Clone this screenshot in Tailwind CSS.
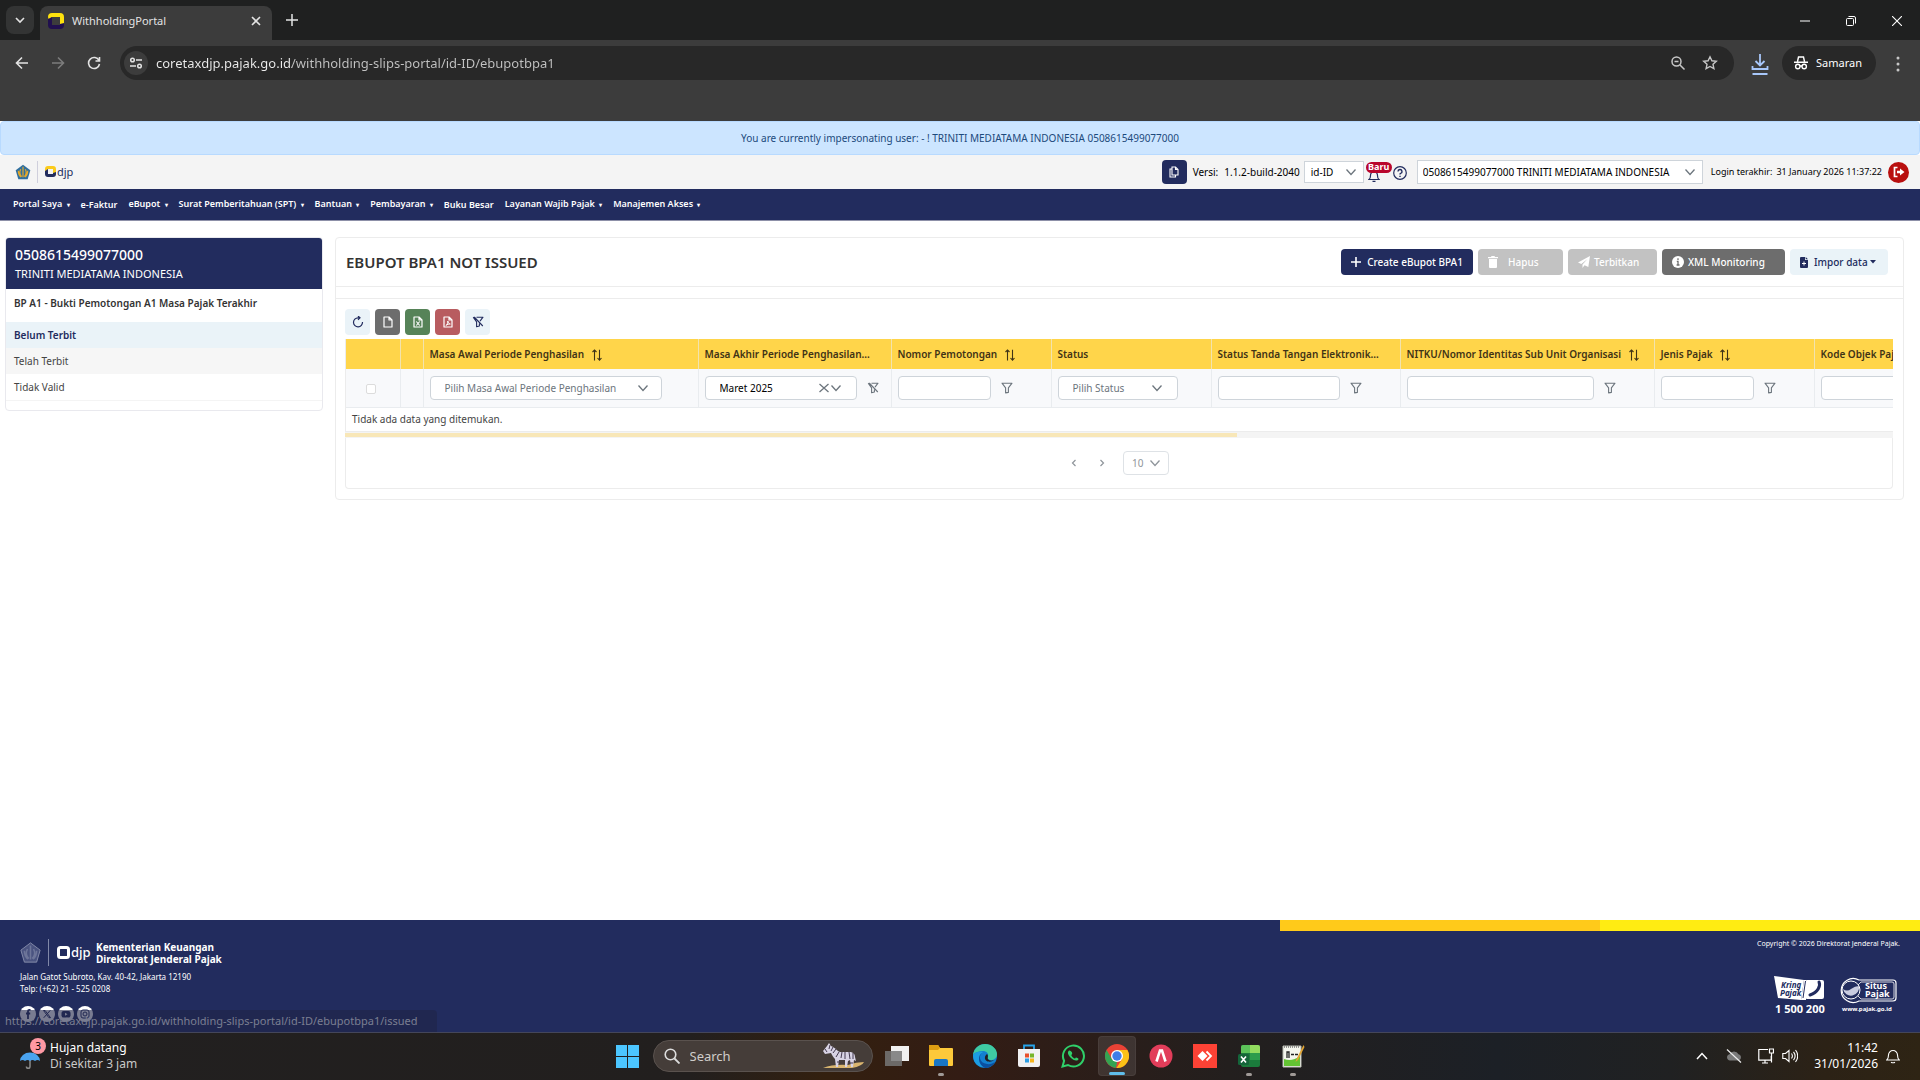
<!DOCTYPE html>
<html lang="id">
<head>
  <meta charset="UTF-8" />
  <meta name="viewport" content="width=device-width, initial-scale=1.0"/>
  <title>WithholdingPortal</title>
  <script src="https://cdn.jsdelivr.net/npm/@tailwindcss/browser@4"></script>
</head>
<body class="min-h-screen flex flex-col bg-white text-[11px] leading-4 text-[#333] font-['Noto_Sans','Open_Sans',sans-serif]">

  <!-- shared icons -->
  <svg class="hidden">
    <symbol id="chevron" viewBox="0 0 12 12"><path d="M1.5 3.5 6 8.5l4.5-5" fill="none" stroke="currentColor" stroke-width="1.3"/></symbol>
    <symbol id="funnel" viewBox="0 0 12 12"><path d="M1 1.2h10L7.4 5.8v4.6l-2.8.5V5.8z" fill="none" stroke="currentColor" stroke-width="1.1" stroke-linejoin="round"/></symbol>
    <symbol id="funnel-slash" viewBox="0 0 12 12"><path d="M4.500 1.200H11L8 5.200M1.200 1.200l3.400 4.600v5l2.800-.8V7.400M2.200 1l8.600 9" fill="none" stroke="currentColor" stroke-width="1.1" stroke-linejoin="round"/></symbol>
    <symbol id="sort" viewBox="0 0 12 12"><path d="M3.5 11.5V1M1.5 3l2-2 2 2M8.5.8v10.4M6.5 9l2 2.2 2-2.2" fill="none" stroke="currentColor" stroke-width="1.1"/></symbol>
    <symbol id="file" viewBox="0 0 12 12"><path d="M2 1h5l3 3v7H2zM7 1v3h3" fill="none" stroke="currentColor" stroke-width="1.2" stroke-linejoin="round"/></symbol>
    <symbol id="emblem" viewBox="0 0 24 24">
      <path d="M12 1 23 9.3 19 23H5L1 9.3z"/>
      <path d="M12 4v16M8.5 8c-2 4-1.500 8 1.500 11M15.500 8c2 4 1.500 8-1.500 11M5 10c0 4 1 7 4 9.500M19 10c0 4-1 7-4 9.500" fill="none" stroke="currentColor" stroke-width="1.800"/>
    </symbol>
  </svg>

  <!-- browser window -->
  <header class="bg-[#3c3c3c] text-[#e3e3e3]">
    <div class="flex h-10 items-end bg-[#1f2020]">
      <button aria-label="Search tabs" class="ml-1.5 mb-1.5 flex h-7 w-7 items-center justify-center rounded-lg bg-[#333434]">
        <svg class="h-3 w-3" viewBox="0 0 12 12"><path d="m2 4 4 4 4-4" fill="none" stroke="currentColor" stroke-width="1.6"/></svg>
      </button>
      <div class="ml-1.5 flex h-[34px] w-[232px] items-center rounded-t-lg bg-[#3c3c3c] pl-2 pr-2.5 pb-1">
        <svg class="h-4 w-4" viewBox="0 0 16 16"><path d="M0 4a4 4 0 0 1 4-4h8a4 4 0 0 1 4 4v7l-4 1V4H4L1 8z" fill="#fde10d"/><path d="M0 6 4 4v8h8v-1l4-1v2a4 4 0 0 1-4 4H4a4 4 0 0 1-4-4z" fill="#21104f"/></svg>
        <span class="ml-2 flex-1 text-[11px]">WithholdingPortal</span>
        <button aria-label="Close tab"><svg class="h-3 w-3" viewBox="0 0 12 12"><path d="m2 2 8 8m0-8-8 8" stroke="currentColor" stroke-width="1.6"/></svg></button>
      </div>
      <button aria-label="New tab" class="mb-3.5 ml-3.5"><svg class="h-3 w-3" viewBox="0 0 12 12"><path d="M6 0v12M0 6h12" stroke="currentColor" stroke-width="1.5"/></svg></button>
      <div class="mb-3.5 ml-auto flex items-center gap-9 pr-[18px] text-white">
        <button aria-label="Minimize"><svg class="h-2.5 w-2.5" viewBox="0 0 10 10"><path d="M0 5h10" stroke="currentColor"/></svg></button>
        <button aria-label="Restore"><svg class="h-2.5 w-2.5" viewBox="0 0 10 10"><path d="M.5 3.500a1 1 0 0 1 1-1h5a1 1 0 0 1 1 1v5a1 1 0 0 1-1 1h-5a1 1 0 0 1-1-1zM2.500.5H8A1.500 1.500 0 0 1 9.500 2v5.500" fill="none" stroke="currentColor"/></svg></button>
        <button aria-label="Close"><svg class="h-2.5 w-2.5" viewBox="0 0 10 10"><path d="m0 0 10 10M10 0 0 10" stroke="currentColor" stroke-width="1.1"/></svg></button>
      </div>
    </div>
    <div class="flex h-[81px] items-start pt-1.5 pr-5 pl-[15px]">
      <div class="flex h-[34px] w-[105px] items-center gap-[22px]">
        <button aria-label="Back"><svg class="h-3.5 w-3.5" viewBox="0 0 14 14"><path d="M13 7H2m5-5.500L1.500 7 7 12.500" fill="none" stroke="currentColor" stroke-width="1.600"/></svg></button>
        <button aria-label="Forward" class="text-[#7c7c7c]"><svg class="h-3.5 w-3.5" viewBox="0 0 14 14"><path d="M1 7h11M7 1.500 12.500 7 7 12.500" fill="none" stroke="currentColor" stroke-width="1.600"/></svg></button>
        <button aria-label="Reload"><svg class="h-3.5 w-3.5" viewBox="0 0 14 14"><path d="M12 4.500A5.500 5.500 0 1 0 12.500 8M12.500 1v4h-4" fill="none" stroke="currentColor" stroke-width="1.600"/></svg></button>
      </div>
      <div class="flex h-[34px] flex-1 items-center rounded-full bg-[#282828] pl-1 pr-4">
        <button aria-label="Site information" class="flex h-6 w-6 items-center justify-center rounded-full bg-[#3c3c3c]">
          <svg class="h-3.5 w-3.5" viewBox="0 0 14 14"><g fill="none" stroke="currentColor" stroke-width="1.500"><circle cx="3.500" cy="4" r="1.800"/><path d="M7 4h6M1 10h6"/><circle cx="10.500" cy="10" r="1.800"/></g></svg>
        </button>
        <input aria-label="Address" value="coretaxdjp.pajak.go.id/withholding-slips-portal/id-ID/ebupotbpa1" class="ml-2 flex-1 bg-[linear-gradient(90deg,#ededed_136px,#c3c3c3_136px)] bg-clip-text text-[13px] text-transparent outline-none"/>
        <button aria-label="Zoom" class="mr-4 text-[#c7c7c7]"><svg class="h-4 w-4" viewBox="0 0 16 16"><g fill="none" stroke="currentColor" stroke-width="1.500"><circle cx="6.500" cy="6.500" r="4.500"/><path d="m10 10 4.500 4.500M4.500 6.500h4"/></g></svg></button>
        <button aria-label="Bookmark" class="text-[#c7c7c7]"><svg class="h-4 w-4" viewBox="0 0 16 16"><path d="m8 1.800 1.900 4 4.400.5-3.300 3 .9 4.400L8 11.500l-3.900 2.200.9-4.400-3.300-3 4.400-.5z" fill="none" stroke="currentColor" stroke-width="1.400"/></svg></button>
      </div>
      <button aria-label="Downloads" class="ml-4 mr-3 mt-1.5 text-[#a8c7fa]"><svg class="h-6 w-5" viewBox="0 0 20 24"><path d="M10 2v11M5.500 9l4.500 4.500L14.500 9M2.500 14v3h15v-3M2.500 22h15" fill="none" stroke="currentColor" stroke-width="1.800"/></svg></button>
      <button class="flex h-[34px] w-[94px] items-center gap-2 rounded-full bg-[#282828] px-3 text-white">
        <svg class="h-3.5 w-3.5 shrink-0" viewBox="0 0 14 14"><g fill="none" stroke="currentColor" stroke-width="1.400"><path d="M3.500 5.500 4.500 1h5l1 4.500M0 6.200h14"/><circle cx="3.800" cy="10.500" r="2.200"/><circle cx="10.200" cy="10.500" r="2.200"/><path d="M6 10h2"/></g></svg>
        <span>Samaran</span>
      </button>
      <button aria-label="Menu" class="mt-2.5 ml-5"><svg class="h-4 w-1" viewBox="0 0 4 16" fill="#c7c7c7"><circle cx="2" cy="2" r="1.500"/><circle cx="2" cy="8" r="1.500"/><circle cx="2" cy="14" r="1.500"/></svg></button>
    </div>
  </header>

  <div class="flex h-[34px] items-center justify-center rounded-sm border border-[#b8daff] bg-[#cce5ff] text-[10px] text-[#1c4a7c]">You are currently impersonating user: - ! TRINITI MEDIATAMA INDONESIA 0508615499077000</div>

  <!-- app header -->
  <div class="flex h-[34px] items-center bg-[#f4f4f4] pl-[15px] pr-[11px] text-[10px] text-black">
    <svg class="h-4 w-4 text-[#e3a92c]" fill="#2f6f9f"><use href="#emblem"/></svg>
    <div class="mx-1.5 h-[22px] border-l border-[#cfcfdc]"></div>
    <svg class="h-5 w-8" viewBox="0 0 32 20">
      <path d="M1 7a3 3 0 0 1 3-3h5a3 3 0 0 1 3 3v6l-3 1V7H4l-3 3z" fill="#fbcb1c"/><path d="M1 9l3-2v5h5v-1l3-1v2a3 3 0 0 1-3 3H4a3 3 0 0 1-3-3z" fill="#222c5e"/>
      <text x="13" y="14" font-size="11" fill="#222c5e">djp</text>
    </svg>
    <button aria-label="Copy" class="ml-auto flex h-6 w-[25px] items-center justify-center rounded-sm bg-[#222c5e] text-white">
      <svg class="h-3 w-3" viewBox="0 0 12 12"><path d="M4 1h3.500L10 3.500V9H4zM7.500 1v2.500H10M4 3H2v8h5.500V9" fill="none" stroke="currentColor" stroke-width="1.100"/></svg>
    </button>
    <span class="ml-1.5">Versi:</span><span class="ml-1.5">1.1.2-build-2040</span>
    <div class="ml-1 flex h-[22px] w-[60px] items-center border border-[#ced4da] bg-white pl-1.5 pr-1.5">
      <select aria-label="Bahasa" class="w-full appearance-none outline-none"><option>id-ID</option></select>
      <svg class="h-3 w-3 shrink-0 text-[#6c757d]"><use href="#chevron"/></svg>
    </div>
    <button aria-label="Notifikasi" class="relative ml-0.5 h-6 w-[25px] text-[#222c5e]">
      <svg class="mt-2 ml-0.5 h-3 w-3" viewBox="0 0 12 12"><path d="M1 9.500h10c-1.500-1-1.500-2-1.500-4a3.500 3.500 0 0 0-7 0c0 2 0 3-1.500 4zM4.500 11.300h3" fill="none" stroke="currentColor" stroke-width="1.200"/></svg>
      <span class="absolute top-0.5 left-0 h-[11px] w-[26px] rounded-full bg-[#b9062c] text-[9px] leading-[10px] font-bold text-white">Baru</span>
    </button>
    <button aria-label="Bantuan" class="ml-0.5 mt-0.5 text-[#222c5e]"><svg class="h-3.5 w-3.5" viewBox="0 0 14 14"><circle cx="7" cy="7" r="6.300" fill="none" stroke="currentColor" stroke-width="1.200"/><path d="M5 5.500a2 2 0 1 1 2.600 1.900c-.4.100-.6.300-.6 1M7 9.800V11" fill="none" stroke="currentColor" stroke-width="1.400"/></svg></button>
    <div class="ml-2.5 flex h-6 w-[286px] items-center border border-[#ced4da] bg-white pl-[5px] pr-1.5">
      <select aria-label="Wajib Pajak" class="w-full appearance-none outline-none"><option>0508615499077000 TRINITI MEDIATAMA INDONESIA</option></select>
      <svg class="h-3 w-3 shrink-0 text-[#6c757d]"><use href="#chevron"/></svg>
    </div>
    <span class="ml-2 text-[9px]">Login terakhir:</span><span class="ml-1 text-[9px]">31 January 2026 11:37:22</span>
    <button aria-label="Keluar" class="ml-1.5 flex h-[21px] w-[21px] items-center justify-center rounded-full bg-[#b9100f] text-white">
      <svg class="h-3 w-3" viewBox="0 0 12 12"><path d="M4.500 1.500h-3v9h3" fill="none" stroke="currentColor" stroke-width="1.700"/><path d="M4 4.800h3V2.500L11.500 6 7 9.500V7.200H4z" fill="currentColor"/></svg>
    </button>
  </div>

  <nav class="flex h-8 items-center gap-[11px] border-b border-[#8d90a8] bg-[#222c5e] pl-[13px] text-[9px] font-semibold text-white">
    <a href="#">Portal Saya <span class="ml-0.5 text-[6px]">▾</span></a>
    <a href="#">e-Faktur</a>
    <a href="#">eBupot <span class="ml-0.5 text-[6px]">▾</span></a>
    <a href="#">Surat Pemberitahuan (SPT) <span class="ml-0.5 text-[6px]">▾</span></a>
    <a href="#">Bantuan <span class="ml-0.5 text-[6px]">▾</span></a>
    <a href="#">Pembayaran <span class="ml-0.5 text-[6px]">▾</span></a>
    <a href="#">Buku Besar</a>
    <a href="#">Layanan Wajib Pajak <span class="ml-0.5 text-[6px]">▾</span></a>
    <a href="#">Manajemen Akses <span class="ml-0.5 text-[6px]">▾</span></a>
  </nav>

  <main class="flex flex-1 items-start gap-3 pt-4 pr-4 pb-8 pl-[5px]">
    <aside class="h-[174px] w-[318px] shrink-0 overflow-hidden rounded border border-[#e9e9ee]">
      <div class="h-[51px] bg-[#222c5e] pt-2 pl-[9px] text-white">
        <div class="text-[14px] leading-[18px] font-medium">0508615499077000</div>
        <div class="text-[11px] leading-5">TRINITI MEDIATAMA INDONESIA</div>
      </div>
      <h2 class="h-[33px] pl-2 text-[10px] leading-7 font-semibold">BP A1 - Bukti Pemotongan A1 Masa Pajak Terakhir</h2>
      <ul class="border-b border-[#f4f4f4] text-[10px] leading-[26px] text-[#444]">
        <li><a href="#" class="block bg-[#eaf3f8] pl-2 font-semibold text-[#222c5e]">Belum Terbit</a></li>
        <li><a href="#" class="block bg-[#f6f6f6] pl-2">Telah Terbit</a></li>
        <li><a href="#" class="block pl-2">Tidak Valid</a></li>
      </ul>
    </aside>

    <section class="min-w-0 flex-1 rounded border border-[#ececec] pb-2.5">
      <div class="flex h-[49px] items-center gap-[5px] border-b border-[#ececec] pr-[15px] pl-2.5 text-[10px] font-medium text-white">
        <h1 class="mr-auto text-[15px] font-semibold text-[#333]">EBUPOT BPA1 NOT ISSUED</h1>
        <button class="flex h-[26px] w-[132px] items-center justify-center gap-1.5 rounded-sm bg-[#222c5e]">
          <svg class="h-2.5 w-2.5" viewBox="0 0 10 10"><path d="M5 0v10M0 5h10" stroke="currentColor" stroke-width="1.600"/></svg>Create eBupot BPA1
        </button>
        <button disabled class="flex h-[26px] w-[85px] items-center gap-2.5 rounded-sm bg-[#c2c2c2] pl-2.5">
          <svg class="h-3 w-2.5" viewBox="0 0 10 12" fill="currentColor"><path d="M0 1h3l.5-1h3L7 1h3v1.300H0zM1 3h8v8a1 1 0 0 1-1 1H2a1 1 0 0 1-1-1z"/></svg>Hapus
        </button>
        <button disabled class="flex h-[26px] w-[89px] items-center gap-1 rounded-sm bg-[#c2c2c2] pl-2.5">
          <svg class="h-3 w-3" viewBox="0 0 12 12" fill="currentColor"><path d="M12 0 10.300 11 6.500 9.300 4.500 12V8.500L9.500 3 3.300 8 0 6.500z"/></svg>Terbitkan
        </button>
        <button class="flex h-[26px] w-[123px] items-center gap-1 rounded-sm bg-[#6d6d6d] pl-2.5">
          <svg class="h-3 w-3" viewBox="0 0 12 12"><circle cx="6" cy="6" r="6" fill="#fff"/><path d="M6 2.300v1.600M4.800 5.400H6v3.400M4.600 9h2.900" fill="none" stroke="#6d6d6d" stroke-width="1.300"/></svg>XML Monitoring
        </button>
        <button class="flex h-[26px] w-[98px] items-center rounded-sm bg-[#eaf3f8] pl-2.5 text-[#222c5e]">
          <svg class="mr-1.5 h-[11px] w-2" viewBox="0 0 8 11"><path d="M1 0h4v3h3v7a1 1 0 0 1-1 1H1a1 1 0 0 1-1-1V1a1 1 0 0 1 1-1zM5.700 0 8 2.300H5.700z" fill="currentColor"/><path d="M4 4.500v4M2 6.500h4" stroke="#fff"/></svg>Impor data
          <svg class="ml-0.5 h-1 w-1.5" viewBox="0 0 6 4" fill="currentColor"><path d="M0 0h6L3 3.500z"/></svg>
        </button>
      </div>
      <div class="mt-[11px] border-t border-[#ececec] pt-2.5 pr-2.5 pl-[9px]">
        <div class="mb-1 flex gap-[5px] text-white">
          <button aria-label="Muat ulang" class="flex h-[26px] w-[25px] items-center justify-center rounded-sm bg-[#eaf3f8] text-[#222c5e]"><svg class="h-3 w-3" viewBox="0 0 12 12"><path d="M10.500 6A4.500 4.500 0 1 1 6 1.800h1.500M6 0l2 1.800L6 3.800" fill="none" stroke="currentColor" stroke-width="1.200"/></svg></button>
          <button aria-label="CSV" class="flex h-[26px] w-[25px] items-center justify-center rounded-sm bg-[#6d6d6d]"><svg class="h-3 w-3"><use href="#file"/></svg></button>
          <button aria-label="Excel" class="flex h-[26px] w-[25px] items-center justify-center rounded-sm bg-[#568358]"><svg class="h-3 w-3" viewBox="0 0 12 12"><use href="#file"/><path d="m4.300 5.500 3.400 4m0-4-3.400 4" stroke="currentColor" stroke-width="1.100"/></svg></button>
          <button aria-label="PDF" class="flex h-[26px] w-[25px] items-center justify-center rounded-sm bg-[#b85c60]"><svg class="h-3 w-3" viewBox="0 0 12 12"><use href="#file"/><path d="M4 9.500C5.500 8 6 6.500 5.800 5c.2 1.700 1 2.800 2.500 3C7 7.800 5 8.300 4 9.500z" fill="none" stroke="currentColor"/></svg></button>
          <button aria-label="Hapus filter" class="flex h-[26px] w-[25px] items-center justify-center rounded-sm bg-[#eaf3f8] text-[#222c5e]"><svg class="h-3 w-3"><use href="#funnel-slash"/></svg></button>
        </div>
        <div class="overflow-hidden border-l border-[#ececec]">
          <table class="w-[2690px] table-fixed border-collapse text-[10px]">
            <colgroup>
              <col class="w-[54px]"/><col class="w-[23px]"/><col class="w-[275px]"/><col class="w-[193px]"/><col class="w-[160px]"/><col class="w-[160px]"/><col class="w-[189px]"/><col class="w-[254px]"/><col class="w-[160px]"/><col/>
            </colgroup>
            <thead>
              <tr class="h-[30px] bg-[#ffd54a] text-left text-[#3f3316]">
                <th class="border-r border-[#f2e3ae]"></th>
                <th class="border-r border-[#f2e3ae]"></th>
                <th class="border-r border-[#f2e3ae] pl-1.5 font-semibold">Masa Awal Periode Penghasilan <svg class="ml-1 inline h-3 w-3"><use href="#sort"/></svg></th>
                <th class="border-r border-[#f2e3ae] pl-1.5 font-semibold">Masa Akhir Periode Penghasilan...</th>
                <th class="border-r border-[#f2e3ae] pl-1.5 font-semibold">Nomor Pemotongan <svg class="ml-1 inline h-3 w-3"><use href="#sort"/></svg></th>
                <th class="border-r border-[#f2e3ae] pl-1.5 font-semibold">Status</th>
                <th class="border-r border-[#f2e3ae] pl-1.5 font-semibold">Status Tanda Tangan Elektronik...</th>
                <th class="border-r border-[#f2e3ae] pl-1.5 font-semibold">NITKU/Nomor Identitas Sub Unit Organisasi <svg class="ml-1 inline h-3 w-3"><use href="#sort"/></svg></th>
                <th class="border-r border-[#f2e3ae] pl-1.5 font-semibold">Jenis Pajak <svg class="ml-1 inline h-3 w-3"><use href="#sort"/></svg></th>
                <th class="pl-1.5 font-semibold">Kode Objek Pajak</th>
              </tr>
              <tr class="h-[38px] bg-[#f8f9fb] text-[#6c757d]">
                <td class="border-r border-b border-[#e9ecef] pr-1 text-center"><input type="checkbox" disabled aria-label="Pilih semua" class="h-2.5 w-2.5 appearance-none rounded-xs border border-[#dcdcdc] bg-white align-middle"/></td>
                <td class="border-r border-b border-[#e9ecef]"></td>
                <td class="border-r border-b border-[#e9ecef] pr-9 pl-1.5">
                  <div class="flex h-6 items-center rounded-sm border border-[#ced4da] bg-white pr-3 pl-3.5">
                    <select aria-label="Masa Awal" class="w-full appearance-none outline-none"><option>Pilih Masa Awal Periode Penghasilan</option></select>
                    <svg class="h-3 w-3 shrink-0"><use href="#chevron"/></svg>
                  </div>
                </td>
                <td class="border-r border-b border-[#e9ecef] pl-1.5">
                  <div class="flex items-center">
                    <div class="flex h-6 flex-1 items-center rounded-sm border border-[#ced4da] bg-white pr-3.5 pl-3.5">
                      <select aria-label="Masa Akhir" class="w-full appearance-none text-black outline-none"><option>Maret 2025</option></select>
                      <button aria-label="Kosongkan" class="shrink-0"><svg class="h-3 w-3" viewBox="0 0 12 12"><path d="m1.500 2 9 8m0-8-9 8" stroke="currentColor" stroke-width="1.300"/></svg></button>
                      <svg class="h-3 w-3 shrink-0"><use href="#chevron"/></svg>
                    </div>
                    <button aria-label="Hapus filter" class="ml-2.5 mr-3"><svg class="h-3 w-3"><use href="#funnel-slash"/></svg></button>
                  </div>
                </td>
                <td class="border-r border-b border-[#e9ecef] pl-1.5"><div class="flex items-center"><input aria-label="Nomor Pemotongan" class="h-6 min-w-0 flex-1 rounded-sm border border-[#ced4da] bg-white"/><button aria-label="Filter" class="ml-2.5 mr-[38px]"><svg class="h-3 w-3"><use href="#funnel"/></svg></button></div></td>
                <td class="border-r border-b border-[#e9ecef] pr-[33px] pl-1.5">
                  <div class="flex h-6 items-center rounded-sm border border-[#ced4da] bg-white pr-3.5 pl-3.5">
                    <select aria-label="Status" class="w-full appearance-none outline-none"><option>Pilih Status</option></select>
                    <svg class="h-3 w-3 shrink-0"><use href="#chevron"/></svg>
                  </div>
                </td>
                <td class="border-r border-b border-[#e9ecef] pl-1.5"><div class="flex items-center"><input aria-label="Status Tanda Tangan" class="h-6 min-w-0 flex-1 rounded-sm border border-[#ced4da] bg-white"/><button aria-label="Filter" class="ml-2.5 mr-[38px]"><svg class="h-3 w-3"><use href="#funnel"/></svg></button></div></td>
                <td class="border-r border-b border-[#e9ecef] pl-1.5"><div class="flex items-center"><input aria-label="NITKU" class="h-6 min-w-0 flex-1 rounded-sm border border-[#ced4da] bg-white"/><button aria-label="Filter" class="ml-2.5 mr-[38px]"><svg class="h-3 w-3"><use href="#funnel"/></svg></button></div></td>
                <td class="border-r border-b border-[#e9ecef] pl-1.5"><div class="flex items-center"><input aria-label="Jenis Pajak" class="h-6 min-w-0 flex-1 rounded-sm border border-[#ced4da] bg-white"/><button aria-label="Filter" class="ml-2.5 mr-[38px]"><svg class="h-3 w-3"><use href="#funnel"/></svg></button></div></td>
                <td class="border-b border-[#e9ecef] pl-1.5"><input aria-label="Kode Objek Pajak" class="block h-6 w-[93px] rounded-sm border border-[#ced4da] bg-white"/></td>
              </tr>
            </thead>
            <tbody>
              <tr class="h-6"><td colspan="10" class="pl-1.5 text-[#444]">Tidak ada data yang ditemukan.</td></tr>
            </tbody>
          </table>
        </div>
        <div class="border-t border-[#ececec] bg-[#f4f4f4] pt-px pb-px"><div class="h-1 w-[57.6%] bg-[#f8e7b8]"></div></div>
        <div class="flex h-[51px] items-center justify-center gap-4 rounded-b border border-t-0 border-[#ececec] text-[#8f959b]">
          <button aria-label="Sebelumnya"><svg class="h-2.5 w-2.5" viewBox="0 0 10 10"><path d="M6.500 2 3.500 5l3 3" fill="none" stroke="currentColor" stroke-width="1.200"/></svg></button>
          <button aria-label="Berikutnya" class="ml-0.5"><svg class="h-2.5 w-2.5" viewBox="0 0 10 10"><path d="m3.500 2 3 3-3 3" fill="none" stroke="currentColor" stroke-width="1.200"/></svg></button>
          <div class="flex h-6 w-[46px] items-center rounded-sm border border-[#dee2e6] pr-[7px] pl-2">
            <select aria-label="Baris per halaman" class="w-full appearance-none text-[10px] outline-none"><option>10</option></select>
            <svg class="h-3 w-3 shrink-0"><use href="#chevron"/></svg>
          </div>
        </div>
      </div>
    </section>
  </main>

  <!-- site footer -->
  <footer class="relative bg-[#222c5e] text-[8px] text-white">
    <div class="ml-auto grid h-[11px] w-1/3 grid-cols-2"><div class="bg-[#ffca1a]"></div><div class="bg-[#ffec12]"></div></div>
    <div class="flex h-[101px] justify-between pr-5 pl-5">
      <div>
        <div class="mt-2 flex h-[27px] items-center">
          <svg class="h-[21px] w-[21px] text-[#6d7599]" fill="#4a5380" stroke="#8d94b0"><use href="#emblem"/></svg>
          <div class="mr-2 ml-[7px] h-[27px] border-l border-[#8088a8]"></div>
          <svg class="h-6 w-[35px]" viewBox="0 0 35 24"><rect x="1.500" y="6.500" width="10" height="10" rx="2" fill="none" stroke="#fff" stroke-width="3"/><text x="14" y="16" font-size="13" font-weight="500" fill="#fff">djp</text></svg>
          <div class="ml-1 text-[10px] leading-3 font-bold">Kementerian Keuangan<br/>Direktorat Jenderal Pajak</div>
        </div>
        <address class="mt-[5px] leading-3 not-italic">Jalan Gatot Subroto, Kav. 40-42, Jakarta 12190<br/>Telp: (+62) 21 - 525 0208</address>
        <div class="mt-[11px] flex gap-[3px] text-[#222c5e]">
          <a href="#" aria-label="Facebook"><svg class="h-4 w-4" viewBox="0 0 16 16"><circle cx="8" cy="8" r="8" fill="#fff"/><path d="M10.500 3.800H9.300c-1 0-1.300.6-1.300 1.500V13M6 7.500h4.200" fill="none" stroke="currentColor" stroke-width="1.800"/></svg></a>
          <a href="#" aria-label="X"><svg class="h-4 w-4" viewBox="0 0 16 16"><circle cx="8" cy="8" r="8" fill="#fff"/><path d="M4.500 4.500h1.600l5.400 7.200H9.900zM11.300 4.300l-6.600 7.500" fill="none" stroke="currentColor"/></svg></a>
          <a href="#" aria-label="YouTube"><svg class="h-4 w-4" viewBox="0 0 16 16"><circle cx="8" cy="8" r="8" fill="#fff"/><rect x="3.500" y="5" width="9" height="6.500" rx="2" fill="currentColor"/><path d="m7 6.700 2.500 1.500L7 9.700z" fill="#fff"/></svg></a>
          <a href="#" aria-label="Instagram"><svg class="h-4 w-4" viewBox="0 0 16 16"><circle cx="8" cy="8" r="8" fill="#fff"/><rect x="4" y="4" width="8" height="8" rx="2" fill="none" stroke="currentColor"/><circle cx="8" cy="8" r="2" fill="none" stroke="currentColor"/></svg></a>
        </div>
      </div>
      <div class="flex flex-col items-end pt-[7px]">
        <p class="text-[7px] leading-3">Copyright © 2026 Direktorat Jenderal Pajak.</p>
        <div class="mt-[25px] mr-0.5 flex gap-3">
          <svg class="h-[42px] w-[52px]" viewBox="0 0 52 42">
            <path d="m0 1 30 4-3 20L4 23z" fill="#fff"/><rect x="31" y="5" width="19" height="19" rx="2" fill="#fff"/><path d="M45 7c2 4-1 10-9 13" fill="none" stroke="#222c5e" stroke-width="3" stroke-linecap="round"/><path d="m30 5-3 20h5V5z" fill="#fff"/><path d="m31.500 6-2.500 17" stroke="#222c5e"/>
            <text x="7" y="13" font-size="8" font-weight="700" font-style="italic" fill="#222c5e">Kring</text><text x="6" y="21" font-size="8" font-weight="700" font-style="italic" fill="#222c5e">Pajak</text>
            <text x="1" y="38" font-size="11" font-weight="700" font-family="Open Sans" fill="#fff" >1 500 200</text>
          </svg>
          <svg class="h-[42px] w-[60px]" viewBox="0 0 60 42">
            <path d="M21 5h34a3 3 0 0 1 3 3v15a3 3 0 0 1-3 3H21a12 12 0 1 1 0-21z" fill="#222c5e" stroke="#fff" stroke-width="1.200"/>
            <path d="M23 7h31a2 2 0 0 1 2 2v13a2 2 0 0 1-2 2H23l-3-3M20 10l3-3" fill="none" stroke="#fff" stroke-width=".8"/>
            <circle cx="13" cy="15" r="9" fill="none" stroke="#fff"/><path d="M5 14q4 3 8 0t8-3a8 8 0 0 1-16 3z" fill="#c9cce0"/>
            <text x="27" y="14" font-size="9" font-weight="700" fill="#fff">Situs</text><text x="27" y="22" font-size="9" font-weight="700" fill="#fff">Pajak</text>
            <text x="4" y="36" font-size="6" font-weight="700" fill="#fff">www.pajak.go.id</text>
          </svg>
        </div>
      </div>
    </div>
    <!-- link status bubble -->
    <div class="absolute bottom-0 left-0 h-[22px] w-[437px] rounded-tr-sm bg-[#1f2547]/60 pl-[5px] text-[11px] leading-[22px] whitespace-nowrap text-[#7b7f92]">https://coretaxdjp.pajak.go.id/withholding-slips-portal/id-ID/ebupotbpa1/issued</div>
  </footer>

  <!-- taskbar -->
  <div class="grid h-12 grid-cols-[1fr_auto_1fr] items-center border-t border-[#44465a] bg-[linear-gradient(90deg,#222020_0%,#221f1e_36%,#33200f_43%,#331c14_50%,#231f1e_64%,#1c2026_78%,#202122_87%,#2c2216_95%,#2e2414_100%)] pb-px text-white">
    <div class="flex items-center pl-5">
      <div class="relative h-7 w-6">
        <svg class="mt-2 h-5 w-5" viewBox="0 0 20 20"><path d="M10 9v7.500a1.800 1.800 0 0 1-3.600 0" fill="none" stroke="#8a8a8a" stroke-width="1.500"/><path d="M0 11a10 8.500 0 0 1 20 0q-2.500-2-5 0-2.500-2-5 0-2.500-2-5 0-2.500-2-5 0z" fill="#4aa3ef"/></svg>
        <span class="absolute -top-1 left-2.5 h-4 w-4 rounded-full bg-[#ff99a4] text-center text-[10px] leading-4 text-black">3</span>
      </div>
      <div class="ml-1.5 text-[12px]"><div>Hujan datang</div><div class="text-[#c9c9c9]">Di sekitar 3 jam</div></div>
    </div>
    <div class="flex items-center">
      <button aria-label="Start" class="flex w-11 justify-center"><svg class="h-[23px] w-[23px]" viewBox="0 0 23 23"><path d="M0 0h11v11H0zM12 0h11v11H12zM0 12h11v11H0zM12 12h11v11H12z" fill="#4cc6ff"/></svg></button>
      <div class="mr-0.5 ml-[3px] flex h-8 w-[220px] items-center rounded-full border border-[#5a524e] bg-[#453d39] pl-2.5">
        <svg class="h-4 w-4 shrink-0" viewBox="0 0 16 16"><circle cx="6.500" cy="6.500" r="5.300" fill="none" stroke="#ddd" stroke-width="1.600"/><path d="m10.500 10.500 5 5" stroke="#ddd" stroke-width="1.800"/></svg>
        <input aria-label="Search" placeholder="Search" class="ml-2.5 min-w-0 flex-1 text-[13px] outline-none placeholder:text-[#d0cdcb]"/>
        <svg class="mr-1.5 h-7 w-11 shrink-0" viewBox="0 0 44 28">
          <path d="M1 26q10-4 25-3 8-3 16-3-2 4-12 6z" fill="#d9b56f"/>
          <path d="M1 9 5 4l2-3 2 3c5 2 6 5 9 6h9c4 0 6 2 6 5l1 4-2-1-1 7h-2l-1-7-2 1-1 6h-2v-7h-6l-1 7h-2l-1-8c-2-2-3-4-4-6l-6 1z" fill="#d8d3e4"/>
          <path d="m8 3-1 4m4-2-2 4m5-2-3 4m6-1-3 5m6-5-1 6m4-6v7m4-7 1 7m3-6v6M3 7l2 3M15 20h3m8 1h5" stroke="#43394f" stroke-width="1"/>
        </svg>
      </div>
      <button aria-label="Task view" class="flex w-11 justify-center"><svg class="h-6 w-6" viewBox="0 0 24 24"><path d="M6 2h18v15H6z" fill="#f1f1f1"/><path d="M0 7h17v15H0z" fill="#777" opacity=".85"/></svg></button>
      <button aria-label="File Explorer" class="relative flex w-11 justify-center"><svg class="h-6 w-6" viewBox="0 0 24 24"><path d="M0 2a1 1 0 0 1 1-1h8l2 3h12a1 1 0 0 1 1 1v16a1 1 0 0 1-1 1H1a1 1 0 0 1-1-1z" fill="#fdc93a"/><path d="M0 2a1 1 0 0 1 1-1h8l2 3-2 2H0z" fill="#dd9d12"/><path d="M5 22v-5a2 2 0 0 1 2-2h10a2 2 0 0 1 2 2v5z" fill="#1976c5"/></svg><span class="absolute -bottom-2 h-[3px] w-1.5 rounded-full bg-[#a09a97]"></span></button>
      <button aria-label="Edge" class="flex w-11 justify-center"><svg class="h-6 w-6" viewBox="0 0 24 24"><circle cx="12" cy="12" r="12" fill="#1380cf"/><path d="M0 11C1 4 6 0 12 0c7 0 12 5 12 10 0 4-3 6-6 6-2 0-4-1-3-3 1-4-2-6-5-6-4 0-8 1-10 4z" fill="#3fcba2"/><path d="M10 8c-5 3-6 11 2 15C3 24 0 16 0 11c2-3 6-4 10-3z" fill="#1c9de2"/><path d="M10 8c-5 3-4 11 4 12 3 .5 6-.5 8-2-2 4-7 6-10 6-7-3-8-13-2-16z" fill="#0b4fa0"/><path d="M14 10c2 2 0 4 1 5 1 2 4 2 6 1-3 3-10 2-9-3 0-1 1-2 2-3z" fill="#231f1e"/></svg></button>
      <button aria-label="Microsoft Store" class="flex w-11 justify-center"><svg class="h-6 w-6" viewBox="0 0 24 24"><path d="M7 6V1.500h10V6" fill="none" stroke="#27a4ea" stroke-width="1.800"/><path d="M1 5h22v16a2 2 0 0 1-2 2H3a2 2 0 0 1-2-2z" fill="#f1f1f3"/><path d="M8 9.500h4v4H8z" fill="#e8502c"/><path d="M13 9.500h4v4h-4z" fill="#77b52b"/><path d="M8 14.500h4v4H8z" fill="#2c9fe6"/><path d="M13 14.500h4v4h-4z" fill="#f6b51e"/></svg></button>
      <button aria-label="WhatsApp" class="flex w-11 justify-center"><svg class="h-6 w-6" viewBox="0 0 24 24"><path d="m1.500 22.500 1.600-5.700A10.500 10.500 0 1 1 7 21z" fill="none" stroke="#2fd06a" stroke-width="2"/><path d="M8 6.500c-2 1.500-1 4.500 1.500 7s5.500 4 7.500 2.500c1-1 .5-1.500-.5-2s-1.500-.8-2 0-1 .8-2.500-.5-2-2.300-1.300-3c.8-.7.5-1.200.2-2.200S9 6 8 6.500z" fill="#2fd06a"/></svg></button>
      <button aria-label="Chrome" class="relative mx-[3px] flex h-10 w-[38px] items-center justify-center rounded border border-white/5 bg-white/10"><svg class="h-6 w-6" viewBox="0 0 24 24"><circle cx="12" cy="12" r="12" fill="#e94235"/><path d="M1.600 6 6.800 15 12 18l-1 6A12 12 0 0 1 1.600 6z" fill="#34a352"/><path d="M12 6h10.400A12 12 0 0 1 11.500 24l5.700-9z" fill="#fbc116"/><circle cx="12" cy="12" r="6" fill="#fff"/><circle cx="12" cy="12" r="4.700" fill="#3f7de8"/></svg><span class="absolute bottom-0 h-[3px] w-4 rounded-full bg-[#60bdea]"></span></button>
      <button aria-label="Accurate" class="flex w-11 justify-center"><svg class="h-6 w-6" viewBox="0 0 24 24"><circle cx="12" cy="12" r="11.500" fill="#e23d5a"/><path d="M7.500 17.500 11 6.500h2l3.500 11" fill="none" stroke="#fff" stroke-width="2.600"/></svg></button>
      <button aria-label="AnyDesk" class="flex w-11 justify-center"><svg class="h-6 w-6" viewBox="0 0 24 24"><path d="M0 0h24v24H0z" fill="#fd4235"/><path d="m9.500 7 5 5-5 5-5-5z" fill="#fff"/><path d="m13.500 7.500 4.500 4.500-4.500 4.500" fill="none" stroke="#fff" stroke-width="1.800"/></svg></button>
      <button aria-label="Excel" class="relative flex w-11 justify-center"><svg class="h-6 w-6" viewBox="0 0 24 24"><rect x="4" y="1" width="19" height="22" rx="2" fill="#1b7b3c"/><path d="M6 1h7v8H4V3a2 2 0 0 1 2-2z" fill="#5cc25a"/><path d="M13 1h8a2 2 0 0 1 2 2v6H13z" fill="#92dc5f"/><path d="M13 9h10v7H13z" fill="#2c9c4c"/><rect x="1" y="10" width="11" height="11" rx="1.500" fill="#14653a"/><path d="m4 12.500 5 6m0-6-5 6" stroke="#fff" stroke-width="1.600"/></svg><span class="absolute -bottom-2 h-[3px] w-1.5 rounded-full bg-[#a09a97]"></span></button>
      <button aria-label="Notepad++" class="relative flex w-11 justify-center"><svg class="h-6 w-6" viewBox="0 0 24 24"><path d="M2 2h18v21H2z" fill="#f4f6ee"/><path d="M3 15q8 3 16-3v10H3z" fill="#63c433"/><path d="M2 2h18v21H2z" fill="none" stroke="#b9bcb2"/><path d="M3 3h16" stroke="#777" stroke-width="1.500" stroke-dasharray="1 1"/><path d="M6 14V8h2v6M10 10.500h3M14 10.500h3" fill="none" stroke="#222" stroke-width="1.300"/><path d="m22.500 1-7 14-1 3 2.500-2L23.500 3z" fill="#e1a535"/></svg><span class="absolute -bottom-2 h-[3px] w-1.5 rounded-full bg-[#a09a97]"></span></button>
    </div>
    <div class="flex items-center justify-end pr-5">
      <button aria-label="Show hidden icons" class="mr-[18px]"><svg class="h-3 w-3" viewBox="0 0 12 12"><path d="m1 9 5-5.500L11 9" fill="none" stroke="currentColor" stroke-width="1.500"/></svg></button>
      <svg class="mr-4 h-4 w-4" viewBox="0 0 16 16"><path d="M4 12.500a3.200 3.200 0 0 1-.5-6.300 5 5 0 0 1 9 0A3.200 3.200 0 0 1 12 12.500z" fill="#7a7a7a"/><path d="m1 1.500 14 13" stroke="#eee" stroke-width="1.200"/></svg>
      <svg class="mr-2 h-4 w-4" viewBox="0 0 16 16"><path d="M10 1.500H.8v10.700h12.400V8M7 12.200V15M4 15h6M11.500 1h4v4h-4zM13.500 5v9.500" fill="none" stroke="#fff" stroke-width="1.200"/></svg>
      <svg class="h-4 w-4" viewBox="0 0 16 16"><path d="M.8 5.500h2.700L7 2.500v11l-3.500-3H.8zM9.500 5.500q1.800 2.500 0 5M11.500 3.800q3.200 4.200 0 8.400M13.500 2q4.500 6 0 12" fill="none" stroke="#fff" stroke-width="1.100"/></svg>
      <div class="ml-4 text-right text-[12px] leading-4"><div>11:42</div><div>31/01/2026</div></div>
      <button aria-label="Notifications" class="ml-2"><svg class="h-4 w-3.5" viewBox="0 0 14 16"><path d="M.8 12h12.400c-1.500-1.500-1.700-2.500-1.700-5a4.500 4.500 0 0 0-9 0c0 2.500-.2 3.500-1.700 5zM5 14.200q2 1.200 4 0" fill="none" stroke="#fff" stroke-width="1.100"/></svg></button>
    </div>
  </div>
</body>
</html>
